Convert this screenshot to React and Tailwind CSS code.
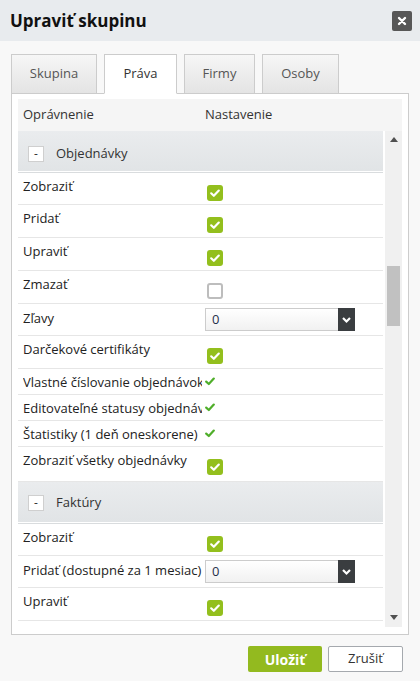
import React from "react";

const font = { fontFamily: '"Open Sans", "Noto Sans", sans-serif' };

function Check() {
  return (
    <div className="w-[16px] h-[16px] rounded-[3px] bg-[#93bf1d] flex items-center justify-center">
      <svg width="16" height="16" viewBox="0 0 16 16">
        <path d="M4.2 8.3 L6.8 10.8 L11.8 5.6" fill="none" stroke="#fff" strokeWidth="2.2" strokeLinecap="round" strokeLinejoin="round" />
      </svg>
    </div>
  );
}

function Empty() {
  return <div className="w-[16px] h-[16px] rounded-[3px] border-2 border-[#bdbdbd] bg-white" />;
}

function SmallCheck() {
  return (
    <svg width="10" height="9" viewBox="0 0 10 9">
      <path d="M1.2 4.6 L3.8 7 L8.8 1.6" fill="none" stroke="#4fae2a" strokeWidth="2.2" strokeLinecap="round" strokeLinejoin="round" />
    </svg>
  );
}

function Select() {
  return (
    <div className="w-[150px] h-[23px] flex border border-[#cccccc] bg-gradient-to-b from-white to-[#f1f1f1]">
      <div className="flex-1 pl-[6px] text-[13px] leading-[21px] text-[#1f2f4a]">0</div>
      <div className="w-[17px] -my-px -mr-px bg-[#3a3d40] flex items-center justify-center">
        <svg width="11" height="8" viewBox="0 0 11 8">
          <path d="M2 2 L5.5 5.5 L9 2" fill="none" stroke="#fff" strokeWidth="2.2" />
        </svg>
      </div>
    </div>
  );
}

function Col1({ children, pt }) {
  return (
    <div className={`w-[187px] shrink-0 pl-[5px] pr-[3px] ${pt}`}>
      <div className="overflow-hidden whitespace-nowrap text-[13px] leading-[18px] text-[#222]">{children}</div>
    </div>
  );
}

function CheckRow({ label, empty, h }) {
  return (
    <div className={`flex border-b border-[#e6e6e6] ${h}`}>
      <Col1 pt="pt-[4px]">{label}</Col1>
      <div className="pt-[12px] pl-[2px]">{empty ? <Empty /> : <Check />}</div>
    </div>
  );
}

function SelectRow({ label }) {
  return (
    <div className="flex border-b border-[#e6e6e6] h-[32px]">
      <Col1 pt="pt-[5px]">{label}</Col1>
      <div className="pt-[4px]">
        <Select />
      </div>
    </div>
  );
}

function TextRow({ label }) {
  return (
    <div className="flex items-center border-b border-[#e6e6e6] h-[26px]">
      <Col1 pt="">{label}</Col1>
      <div className="flex items-center">
        <SmallCheck />
      </div>
    </div>
  );
}

function Group({ label, pt }) {
  return (
    <div>
      <div className={`h-[40px] bg-gradient-to-b from-[#eaecee] to-[#e1e4e6] flex items-center pl-[10px] ${pt}`}>
        <div className="w-[16px] h-[16px] bg-white border border-[#cfcfcf] flex items-center justify-center text-[12px] leading-none text-[#333]">
          -
        </div>
        <span className="ml-[12px] text-[13px] text-[#333]">{label}</span>
      </div>
      <div className="h-px bg-white" />
      <div className="h-px bg-[#d9dcde]" />
    </div>
  );
}

function Tab({ label, active, w }) {
  return (
    <div
      className={`${w} h-[40px] flex items-center justify-center text-[13px] border border-[#cccccc] ${
        active ? "bg-white border-b-white text-[#333]" : "bg-gradient-to-b from-[#f6f6f6] to-[#e4e4e4] text-[#555]"
      }`}
    >
      {label}
    </div>
  );
}

export default function App() {
  return (
    <div className="w-[420px] h-[681px] bg-[#f8f8f8] flex flex-col overflow-hidden" style={font}>
      <div className="h-[41px] shrink-0 bg-[#e8ebee] flex items-center justify-between pl-[10px] pr-[8px]">
        <div className="text-[17px] font-bold text-[#111] leading-none">Upraviť skupinu</div>
        <div className="w-[20px] h-[20px] bg-[#575757] rounded-[2px] flex items-center justify-center">
          <svg width="10" height="10" viewBox="0 0 10 10">
            <path d="M2 2 L8 8 M8 2 L2 8" stroke="#fff" strokeWidth="2.4" strokeLinecap="round" />
          </svg>
        </div>
      </div>

      <div className="pl-[11px] pr-[11px] pt-[13px]">
        <div className="flex gap-[7px] relative z-10 -mb-px">
          <Tab label="Skupina" w="w-[86px]" />
          <Tab label="Práva" w="w-[73px]" active />
          <Tab label="Firmy" w="w-[71px]" />
          <Tab label="Osoby" w="w-[77px]" />
        </div>
        <div className="border border-[#cccccc] bg-white pt-[5px] pl-[6px] pr-[6px] pb-[7px]">
          <div className="h-[32px] bg-[#f5f5f5] flex items-center text-[13px] text-[#333]">
            <div className="w-[187px] pl-[5px]">Oprávnenie</div>
            <div>Nastavenie</div>
          </div>
          <div className="h-[496px] flex">
            <div className="w-[365px] overflow-hidden">
              <Group label="Objednávky" pt="pt-[5px]" />
              <CheckRow label="Zobraziť" h="h-[32px]" />
              <CheckRow label="Pridať" h="h-[33px]" />
              <CheckRow label="Upraviť" h="h-[33px]" />
              <CheckRow label="Zmazať" h="h-[33px]" empty />
              <SelectRow label="Zľavy" />
              <CheckRow label="Darčekové certifikáty" h="h-[33px]" />
              <TextRow label="Vlastné číslovanie objednávok" />
              <TextRow label="Editovateľné statusy objednávok" />
              <TextRow label="Štatistiky (1 deň oneskorene)" />
              <CheckRow label="Zobraziť všetky objednávky" h="h-[35px]" />
              <Group label="Faktúry" pt="pt-[1px]" />
              <CheckRow label="Zobraziť" h="h-[32px]" />
              <SelectRow label="Pridať (dostupné za 1 mesiac)" />
              <CheckRow label="Upraviť" h="h-[33px]" />
            </div>
            <div className="ml-[2px] w-[17px] bg-[#f0f0f0] flex flex-col items-center">
              <svg width="8" height="5" viewBox="0 0 8 5" className="mt-[6px]">
                <path d="M0 5 L4 0 L8 5 Z" fill="#505050" />
              </svg>
              <div className="mt-[124px] w-[13px] h-[60px] bg-[#c1c1c1]" />
              <div className="flex-1" />
              <svg width="8" height="5" viewBox="0 0 8 5" className="mb-[7px]">
                <path d="M0 0 L8 0 L4 5 Z" fill="#505050" />
              </svg>
            </div>
          </div>
        </div>
      </div>

      <div className="flex justify-end gap-[6px] pr-[17px] pt-[11px]">
        <div className="w-[74px] h-[26px] bg-[#93ba1f] rounded-[2px] flex items-center justify-center text-white font-bold text-[14px]">
          Uložiť
        </div>
        <div className="w-[75px] h-[26px] bg-white border border-[#a5a9ae] rounded-[2px] flex items-center justify-center text-[#333] text-[13px]">
          Zrušiť
        </div>
      </div>
    </div>
  );
}
